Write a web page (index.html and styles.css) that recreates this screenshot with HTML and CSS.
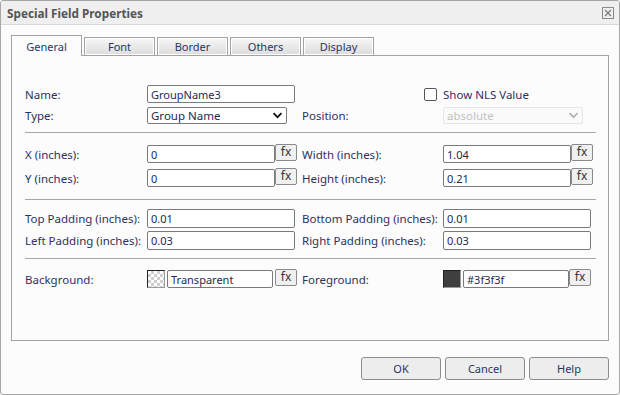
FILE: index.html
```html
<!DOCTYPE html>
<html lang="en">
<head>
  <meta charset="UTF-8">
  <title>Special Field Properties</title>
  <link rel="stylesheet" href="styles.css">
</head>
<body>

  <div class="dialog">
    <div class="titlebar">
      <span class="title">Special Field Properties</span>
      <span class="close">
        <svg width="10" height="10" viewBox="0 0 10 10"><path d="M2 2 L8 8 M8 2 L2 8" stroke="#7a7a7a" stroke-width="1.3" fill="none"/></svg>
      </span>
    </div>

    <div class="tabs">
      <div class="tab active">General</div>
      <div class="tab">Font</div>
      <div class="tab">Border</div>
      <div class="tab">Others</div>
      <div class="tab">Display</div>
    </div>

    <div class="panel">
      <!-- Nom et type -->
      <div class="grid sec-a">
        <label>Name:</label>
        <div class="field"><input type="text" class="w148" value="GroupName3"></div>
        <span class="chk"></span>
        <span class="chk-label">Show NLS Value</span>

        <label>Type:</label>
        <div class="field">
          <div class="sel">
            <select><option>Group Name</option></select>
            <svg class="arrow" width="11" height="7" viewBox="0 0 11 7"><path d="M1.5 1.2 L5.5 5.2 L9.5 1.2" stroke="#111" stroke-width="1.8" fill="none"/></svg>
          </div>
        </div>
        <label>Position:</label>
        <div class="field">
          <div class="sel disabled">
            <select disabled><option>absolute</option></select>
            <svg class="arrow" width="11" height="7" viewBox="0 0 11 7"><path d="M1.5 1.2 L5.5 5.2 L9.5 1.2" stroke="#b5b5b5" stroke-width="1.8" fill="none"/></svg>
          </div>
        </div>
      </div>
      <hr>

      <!-- Position et taille -->
      <div class="grid sec-b">
        <label>X (inches):</label>
        <div class="field"><input type="text" class="w128" value="0"><button class="fx">fx</button></div>
        <label>Width (inches):</label>
        <div class="field"><input type="text" class="w128" value="1.04"><button class="fx">fx</button></div>

        <label>Y (inches):</label>
        <div class="field"><input type="text" class="w128" value="0"><button class="fx">fx</button></div>
        <label>Height (inches):</label>
        <div class="field"><input type="text" class="w128" value="0.21"><button class="fx">fx</button></div>
      </div>
      <hr>

      <!-- Marges -->
      <div class="grid sec-c">
        <label>Top Padding (inches):</label>
        <div class="field"><input type="text" class="w148" value="0.01"></div>
        <label>Bottom Padding (inches):</label>
        <div class="field"><input type="text" class="w148" value="0.01"></div>

        <label>Left Padding (inches):</label>
        <div class="field"><input type="text" class="w148" value="0.03"></div>
        <label>Right Padding (inches):</label>
        <div class="field"><input type="text" class="w148" value="0.03"></div>
      </div>
      <hr>

      <!-- Couleurs -->
      <div class="grid sec-d">
        <label>Background:</label>
        <div class="field"><span class="swatch checker"></span><input type="text" class="w106" value="Transparent"><button class="fx fx-gap">fx</button></div>
        <label>Foreground:</label>
        <div class="field"><span class="swatch dark"></span><input type="text" class="w106" value="#3f3f3f"><button class="fx">fx</button></div>
      </div>
    </div>

    <div class="footer">
      <button class="btn">OK</button>
      <button class="btn">Cancel</button>
      <button class="btn">Help</button>
    </div>
  </div>

</body>
</html>
```

FILE: styles.css
```css
body {
  margin: 0;
  font-family: "Noto Sans", sans-serif;
}
.dialog {
  width: 620px;
  height: 395px;
  box-sizing: border-box;
  border: 1px solid #a6a6a6;
  border-radius: 3px;
  background: #fbfcfb;
  overflow: hidden;
}
.titlebar {
  height: 23px;
  background: #eeefee;
  border-bottom: 1px solid #d9d9d9;
  display: flex;
  align-items: center;
  justify-content: space-between;
  padding: 0 5px 0 6px;
}
.title {
  font-weight: bold;
  font-size: 11.75px;
  color: #555;
}
.close {
  width: 12px;
  height: 12px;
  box-sizing: border-box;
  border: 1px solid #8a8a8a;
  display: flex;
  align-items: center;
  justify-content: center;
}
.tabs {
  display: flex;
  align-items: flex-end;
  gap: 2px;
  margin: 10px 0 -1px 10px;
  position: relative;
  z-index: 1;
}
.tab {
  width: 71px;
  height: 19px;
  box-sizing: border-box;
  border: 1px solid #a3a3a3;
  background: linear-gradient(#f7f7f7, #dcdcdc);
  box-shadow: inset 0 0 0 1px #fff;
  font-size: 11px;
  color: #1f3763;
  display: flex;
  align-items: center;
  justify-content: center;
  padding-bottom: 1px;
}
.tab.active {
  height: 21px;
  border-bottom: none;
  background: #fbfcfb;
  box-shadow: none;
  padding: 0;
}
.panel {
  width: 598px;
  height: 286px;
  box-sizing: border-box;
  margin-left: 10px;
  border: 1px solid #a3a3a3;
  padding: 0 12px 0 13px;
}
.grid {
  display: grid;
  grid-template-columns: 122px 155px 141px 152px;
  align-items: center;
}
.sec-a {
  margin-top: 29px;
  grid-template-rows: 18px 17px;
  row-gap: 4px;
}
.sec-b {
  margin-top: 12px;
  grid-template-rows: 18px 18px;
  row-gap: 6px;
}
.sec-c {
  margin-top: 9px;
  grid-template-rows: 19px 19px;
  row-gap: 3px;
}
.sec-d {
  margin-top: 11px;
  grid-template-rows: 18px;
}
hr {
  border: none;
  height: 1px;
  background: #a8a8a8;
  margin: 8px 0 0;
}
.sec-b + hr {
  margin-top: 12px;
}
label, .chk-label {
  font-size: 11.5px;
  color: #30305e;
  white-space: nowrap;
}
.field {
  display: flex;
  align-items: flex-start;
  height: 100%;
}
input {
  height: 100%;
  box-sizing: border-box;
  border: 1px solid #7a7a7a;
  border-radius: 2px;
  padding: 0 3px;
  background: #fff;
  font-family: "Noto Sans", sans-serif;
  font-size: 11px;
  color: #1d2a50;
}
.w148 { width: 148px; }
.w128 { width: 128px; }
.w106 { width: 106px; }
.fx {
  width: 22px;
  height: 17px;
  margin-top: -1px;
  box-sizing: border-box;
  border: 1px solid #8a8a8a;
  border-radius: 2px;
  background: #f0f0f0;
  padding: 0 0 1px;
  font-family: "Noto Sans", sans-serif;
  font-size: 12px;
  color: #333;
  line-height: 14px;
}
.fx-gap {
  margin-left: 2px;
}
.chk {
  width: 13px;
  height: 13px;
  box-sizing: border-box;
  border: 1px solid #555;
  border-radius: 2px;
  background: #fff;
  justify-self: end;
  margin-right: 6px;
}
.sel {
  position: relative;
  width: 140px;
  height: 17px;
}
select {
  appearance: none;
  display: block;
  width: 100%;
  height: 17px;
  box-sizing: border-box;
  border: 1px solid #7a7a7a;
  border-radius: 2px;
  padding: 0 3px;
  background: #fff;
  font-family: "Noto Sans", sans-serif;
  font-size: 11.5px;
  line-height: 15px;
  color: #1d2a50;
}
.sel .arrow {
  position: absolute;
  right: 4px;
  top: 5px;
}
.sel.disabled select {
  border-color: #dedede;
  background: #fafafa;
  color: #a9a9a9;
}
.swatch {
  width: 18px;
  height: 18px;
  box-sizing: border-box;
  border: 1px solid #9a9a9a;
  border-top-color: #222;
  border-left-color: #222;
  margin-right: 2px;
}
.checker {
  background: repeating-conic-gradient(#cfcfcf 0 25%, #fff 0 50%) 0 0 / 6px 6px;
}
.dark {
  background: #3f3f3f;
}
.footer {
  display: flex;
  justify-content: flex-end;
  gap: 4px;
  margin: 16px 10px 0 0;
}
.btn {
  width: 80px;
  height: 23px;
  border: 1px solid #8c8c8c;
  border-radius: 3px;
  background: #ecedec;
  font-family: "Noto Sans", sans-serif;
  font-size: 11px;
  color: #1f3763;
}
```
